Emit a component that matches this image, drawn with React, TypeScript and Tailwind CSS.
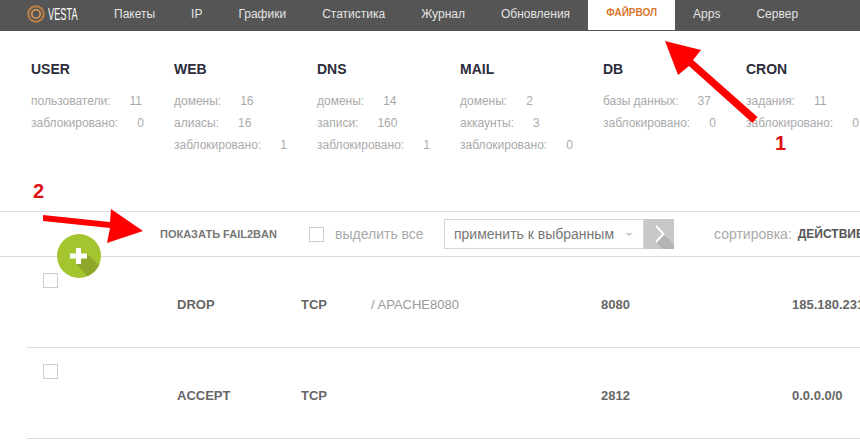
const navItems = ["Пакеты", "IP", "Графики", "Статистика", "Журнал", "Обновления"]

const stats = [
  { title: "USER", rows: [["пользователи:", "11"], ["заблокировано:", "0"]] },
  { title: "WEB", rows: [["домены:", "16"], ["алиасы:", "16"], ["заблокировано:", "1"]] },
  { title: "DNS", rows: [["домены:", "14"], ["записи:", "160"], ["заблокировано:", "1"]] },
  { title: "MAIL", rows: [["домены:", "2"], ["аккаунты:", "3"], ["заблокировано:", "0"]] },
  { title: "DB", rows: [["базы данных:", "37"], ["заблокировано:", "0"]] },
  { title: "CRON", rows: [["задания:", "11"], ["заблокировано:", "0"]] },
]

const rules = [
  { action: "DROP", proto: "TCP", comment: "/ APACHE8080", port: "8080", ip: "185.180.231" },
  { action: "ACCEPT", proto: "TCP", comment: "", port: "2812", ip: "0.0.0.0/0" },
]

function Logo() {
  return (
    <div className="flex items-center w-[69px] shrink-0 pb-[3px]">
      <svg width="18" height="18" viewBox="0 0 18 18" className="shrink-0">
        <circle cx="9" cy="9" r="7.6" fill="none" stroke="#d98b45" strokeWidth="2.2" strokeDasharray="1.4 0.5" />
        <circle cx="9" cy="9" r="4.2" fill="none" stroke="#e39a55" strokeWidth="1.6" />
      </svg>
      <span className="ml-[3px] text-[16.5px] leading-none text-white origin-left scale-x-[0.56]">VESTA</span>
    </div>
  )
}

function Header() {
  return (
    <header className="flex h-[31px] bg-[#555555] pl-[27px] text-xs">
      <Logo />
      {navItems.map((item) => (
        <div key={item} className="px-[18px] leading-[28px] text-[#e4e4e4]">{item}</div>
      ))}
      <div className="h-[30px] w-[87px] bg-white text-center text-[10px] font-bold leading-[26px] text-[#d9772f]">ФАЙРВОЛ</div>
      <div className="px-[18px] leading-[28px] text-[#e4e4e4]">Apps</div>
      <div className="px-[18px] leading-[28px] text-[#e4e4e4]">Сервер</div>
    </header>
  )
}

function Stats() {
  return (
    <section className="flex h-[180px] pl-[31px] pt-[30px]">
      {stats.map((s) => (
        <div key={s.title} className="w-[143px] shrink-0">
          <h3 className="text-[14px] font-bold leading-4 text-[#2c2c3a]">{s.title}</h3>
          <div className="mt-[13px] text-xs leading-[22px] text-[#aaaaaa]">
            {s.rows.map(([label, value]) => (
              <div key={label} className="flex">
                <span>{label}</span>
                <span className="ml-[19px]">{value}</span>
              </div>
            ))}
          </div>
        </div>
      ))}
    </section>
  )
}

function Toolbar() {
  return (
    <div className="flex h-[46px] items-center overflow-hidden whitespace-nowrap border-y border-[#dddddd] pl-[160px]">
      <span className="w-[149px] shrink-0 text-[11px] font-bold text-[#777777]">ПОКАЗАТЬ FAIL2BAN</span>
      <span className="h-[15px] w-[15px] shrink-0 border border-[#cccccc]" />
      <span className="ml-[11px] w-[109px] shrink-0 text-[14px] text-[#aaaaaa]">выделить все</span>
      <div className="flex h-[30px] w-[200px] shrink-0 items-center border border-[#d5d5d5] pl-[9px] text-[14px] text-[#777777]">
        применить к выбранным
        <span className="ml-[11px] h-0 w-0 border-x-[4px] border-t-[3px] border-x-transparent border-t-[#cccccc]" />
      </div>
      <div className="relative h-[30px] w-[30px] shrink-0 overflow-hidden bg-[#c8c8c8]">
        <svg width="30" height="30" viewBox="0 0 30 30" className="absolute inset-0">
          <polygon points="12,23 19,15 30,25 30,30 19,30" fill="#b4b4b4" />
          <polyline points="12,7 19.5,15 12,23" fill="none" stroke="#ffffff" strokeWidth="2" />
        </svg>
      </div>
      <span className="ml-10 shrink-0 text-[14px] text-[#aaaaaa]">сортировка:</span>
      <span className="ml-[6px] shrink-0 text-xs font-bold text-[#555555]">ДЕЙСТВИЕ</span>
    </div>
  )
}

function RuleRow({ rule }: { rule: (typeof rules)[number] }) {
  return (
    <div className="ml-[27px] flex h-[91px] whitespace-nowrap border-b border-[#dddddd]">
      <div className="w-[150px] shrink-0 pl-4 pt-4">
        <span className="block h-[15px] w-[15px] border border-[#cccccc]" />
      </div>
      <div className="flex flex-1 items-start pt-[38px] text-[13px] font-bold text-[#666666]">
        <span className="w-[124px] shrink-0">{rule.action}</span>
        <span className="w-[70px] shrink-0">{rule.proto}</span>
        <span className="w-[230px] shrink-0 font-normal text-[#999999]">{rule.comment}</span>
        <span className="w-[191px] shrink-0">{rule.port}</span>
        <span className="shrink-0">{rule.ip}</span>
      </div>
    </div>
  )
}

function Annotations() {
  return (
    <>
      <svg width="860" height="444" viewBox="0 0 860 444" className="pointer-events-none absolute left-0 top-0">
        <polygon points="757.5,117 752.5,123 689,66 678,75 665,41 701,50 693,60" fill="#ff0000" />
        <polygon points="43,215 43,221 110,228 107,243 143,231 111,209 110,222" fill="#ff0000" />
      </svg>
      <span className="absolute left-[775px] top-[131px] text-[20px] font-bold leading-6 text-[#e01010]">1</span>
      <span className="absolute left-[33px] top-[179px] text-[20px] font-bold leading-6 text-[#e01010]">2</span>
      <div className="absolute left-[57px] top-[234px] h-11 w-11 overflow-hidden rounded-full bg-[#a4c52f]">
        <svg width="44" height="44" viewBox="0 0 44 44" className="absolute inset-0">
          <polygon points="20,31 30,20 50,38 38,50" fill="#8fa82b" />
          <path d="M19 14h5v5.500h6v5h-6v5.500h-5v-5.500h-6v-5h6z" fill="#ffffff" />
        </svg>
      </div>
    </>
  )
}

export default function App() {
  return (
    <div className="relative h-[444px] w-[860px] overflow-hidden bg-white font-['Liberation_Sans',Arial,sans-serif]">
      <Header />
      <Stats />
      <Toolbar />
      {rules.map((r) => (
        <RuleRow key={r.action} rule={r} />
      ))}
      <Annotations />
    </div>
  )
}
